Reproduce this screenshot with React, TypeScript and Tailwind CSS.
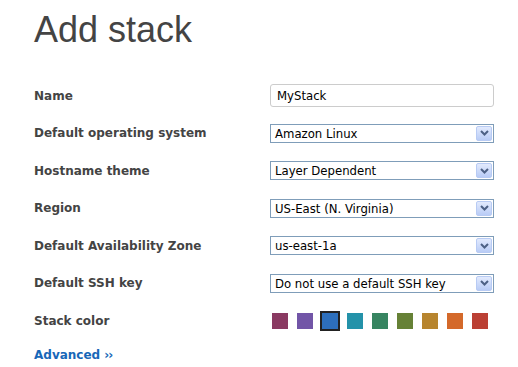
import React from "react";

function Chevron() {
  return (
    <div className="w-[16px] h-[15px] border border-[#b8cbf4] rounded-[2px] bg-gradient-to-b from-[#e2eafd] to-[#b9ccf6] flex items-center justify-center">
      <svg width="9" height="6" viewBox="0 0 9 6">
        <path d="M1 1 L4.5 4.5 L8 1" fill="none" stroke="#4d6185" strokeWidth="2" />
      </svg>
    </div>
  );
}

function Select({ value }: { value: string }) {
  return (
    <div className="w-[224px] h-[19px] border border-[#7f9db9] bg-white flex items-center pl-[4px] pr-[1px]">
      <span className="flex-1 text-[13px] text-black leading-none font-['DejaVu_Sans_Condensed','Liberation_Sans',sans-serif]">{value}</span>
      <Chevron />
    </div>
  );
}

function Row({ label, children }: { label: string; children: React.ReactNode }) {
  return (
    <div className="flex items-center h-[37.5px]">
      <div className="w-[236px] text-[12px] font-bold text-[#444] font-['DejaVu_Sans',sans-serif]">{label}</div>
      {children}
    </div>
  );
}

const colors = ["#8a3a62", "#7255a7", "#2d6fbc", "#2492a9", "#378561", "#668136", "#b7852e", "#d4692a", "#bb4034"];

export default function App() {
  return (
    <div className="w-[518px] h-[367px] bg-white pl-[34px] pt-[9px] font-['Liberation_Sans',Arial,sans-serif]">
      <h1 className="text-[36px] leading-[41px] text-[#444] font-normal">Add stack</h1>
      <div className="mt-[27px]">
        <Row label="Name">
          <div className="w-[224px] h-[23px] border border-[#cccccc] rounded-[3px] flex items-center pl-[6px] text-[13px] text-black font-['DejaVu_Sans_Condensed','Liberation_Sans',sans-serif]">MyStack</div>
        </Row>
        <Row label="Default operating system">
          <Select value="Amazon Linux" />
        </Row>
        <Row label="Hostname theme">
          <Select value="Layer Dependent" />
        </Row>
        <Row label="Region">
          <Select value="US-East (N. Virginia)" />
        </Row>
        <Row label="Default Availability Zone">
          <Select value="us-east-1a" />
        </Row>
        <Row label="Default SSH key">
          <Select value="Do not use a default SSH key" />
        </Row>
        <Row label="Stack color">
          <div className="flex gap-[9px] pl-[2px]">
            {colors.map((c, i) => (
              <div
                key={c}
                className={i === 2 ? "w-[16px] h-[16px] outline-2 outline-[#222]" : "w-[16px] h-[16px]"}
                style={{ backgroundColor: c }}
              />
            ))}
          </div>
        </Row>
        <div className="h-[30px] flex items-center text-[12px] font-bold text-[#1767b8] font-['DejaVu_Sans',sans-serif]">
          Advanced<span className="ml-[4px] tracking-[-1px]">››</span>
        </div>
      </div>
    </div>
  );
}
